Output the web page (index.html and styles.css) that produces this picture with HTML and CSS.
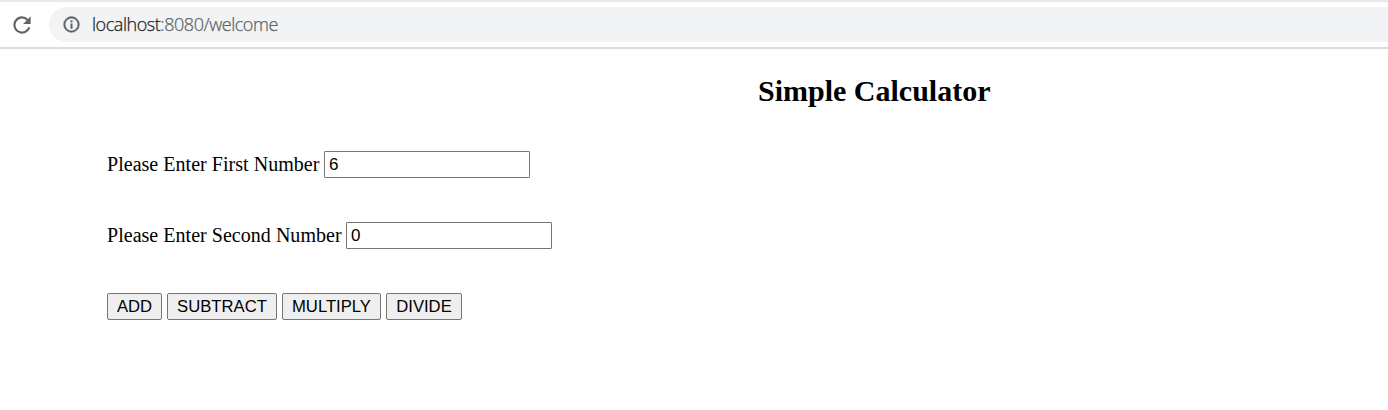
FILE: index.html
```html
<!DOCTYPE html>
<html lang="en">
<head>
<meta charset="utf-8">
<title>Simple Calculator</title>
<link rel="stylesheet" href="styles.css">
</head>
<body>
<header class="toolbar">
  <svg class="reload" viewBox="0 0 24 24"><path d="M17.65 6.35A7.96 7.96 0 0 0 12 4a8 8 0 1 0 7.73 10h-2.08A6 6 0 1 1 12 6c1.66 0 3.14.69 4.22 1.78L13 11h7V4z"/></svg>
  <div class="address">
    <svg class="info" viewBox="0 0 24 24"><path d="M11 17h2v-6h-2zm0-8h2V7h-2zm1-7a10 10 0 1 0 0 20 10 10 0 0 0 0-20zm0 18a8 8 0 1 1 0-16 8 8 0 0 1 0 16z"/></svg>
    <span class="url">localhost<span class="path">:8080/welcome</span></span>
  </div>
</header>
<main class="page">
  <h2 class="title">Simple Calculator</h2>
  <form class="form">
    <div class="row"><label class="label label-first" for="n1">Please Enter First Number</label><input class="field" id="n1" value="6"></div>
    <div class="row"><label class="label label-second" for="n2">Please Enter Second Number</label><input class="field" id="n2" value="0"></div>
    <div class="buttons">
      <button class="button add" type="button">ADD</button>
      <button class="button subtract" type="button">SUBTRACT</button>
      <button class="button multiply" type="button">MULTIPLY</button>
      <button class="button divide" type="button">DIVIDE</button>
    </div>
  </form>
</main>
</body>
</html>
```
FILE: styles.css
```css
* { box-sizing: border-box; }
body { margin: 0; background: #fff; color: #000; font-family: "Liberation Serif", "Times New Roman", serif; overflow: hidden; }
.toolbar { display: flex; align-items: center; height: 49px; padding-left: 9px; border-top: 2px solid #e6e9ed; border-bottom: 2px solid #dadce0; }
.reload { width: 26px; height: 26px; fill: #5f6368; margin-right: 14px; }
.address { display: flex; align-items: center; flex: 1; height: 35px; padding-left: 13px; border-radius: 18px 0 0 18px; background: #f1f3f4; }
.info { width: 19px; height: 19px; fill: #5f6368; stroke: #5f6368; stroke-width: 0.5; margin-right: 11px; }
.url { font: 300 18px/24px "Open Sans", sans-serif; color: #202124; letter-spacing: -0.45px; padding-bottom: 1px; -webkit-text-stroke: 0.25px currentColor; }
.path { color: #5f6368; }
.title { margin: 25px 0 0; padding-left: 758px; font-size: 30px; line-height: 34px; white-space: nowrap; }
.form { padding: 43px 0 0 107px; }
.row { display: flex; align-items: center; height: 27px; margin-bottom: 44px; font-size: 20px; letter-spacing: 0.03px; white-space: nowrap; }
.label { padding-bottom: 1px; }
.label-first { width: 217px; }
.label-second { width: 239px; }
.field { width: 206px; height: 27px; padding: 1px 4px; border: 1px solid #767676; border-radius: 1px; font: 17px "Liberation Sans", Arial, sans-serif; color: #000; }
.buttons { display: flex; gap: 5px; }
.button { height: 27px; padding: 0; border: 1px solid #767676; border-radius: 2px; background: #efefef; color: #000; font: 16.67px "Liberation Sans", Arial, sans-serif; }
.add { width: 55px; }
.subtract { width: 110px; }
.multiply { width: 99px; }
.divide { width: 76px; }
```
